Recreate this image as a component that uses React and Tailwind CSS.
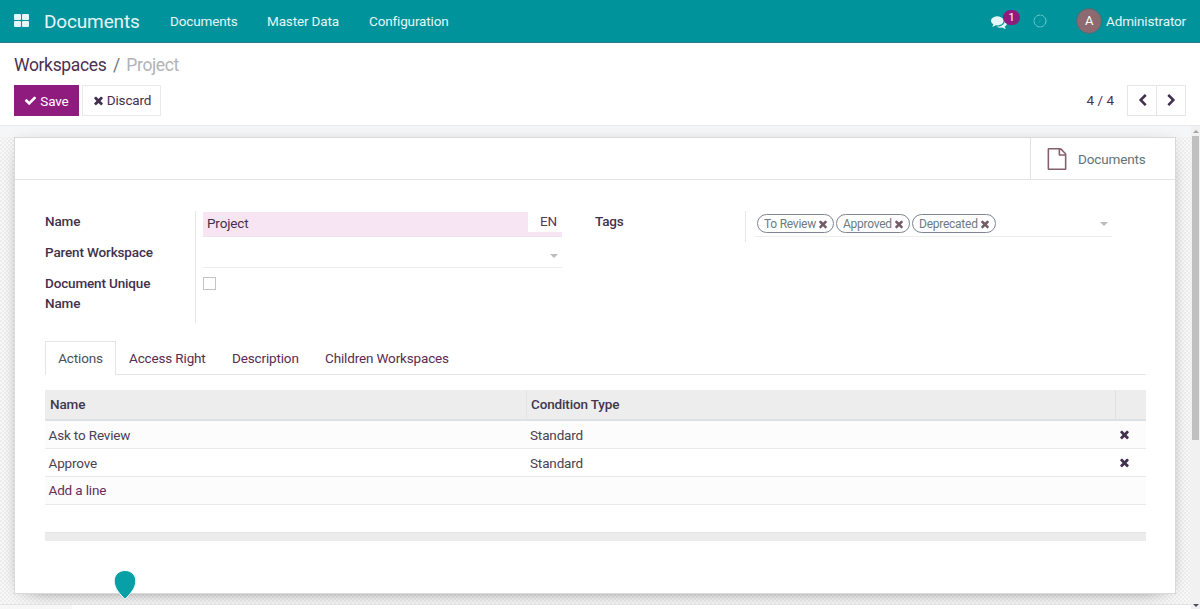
import React from "react";

const icons = {
  times:
    "M1490 1322q0 40-28 68l-136 136q-28 28-68 28t-68-28l-294-294-294 294q-28 28-68 28t-68-28l-136-136q-28-28-28-68t28-68l294-294-294-294q-28-28-28-68t28-68l136-136q28-28 68-28t68 28l294 294 294-294q28-28 68-28t68 28l136 136q28 28 28 68t-28 68l-294 294 294 294q28 28 28 68z",
  check:
    "M1671 566q0 40-28 68l-724 724-136 136q-28 28-68 28t-68-28l-136-136-362-362q-28-28-28-68t28-68l136-136q28-28 68-28t68 28l294 295 656-657q28-28 68-28t68 28l136 136q28 28 28 68z",
  left: "M1427 301l-531 531 531 531q19 19 19 45t-19 45l-166 166q-19 19-45 19t-45-19l-742-742q-19-19-19-45t19-45l742-742q19-19 45-19t45 19l166 166q19 19 19 45t-19 45z",
  right:
    "M1363 877l-742 742q-19 19-45 19t-45-19l-166-166q-19-19-19-45t19-45l531-531-531-531q-19-19-19-45t19-45l166-166q19-19 45-19t45 19l742 742q19 19 19 45t-19 45z",
  file: "M1596 380q28 28 48 76t20 88v1152q0 40-28 68t-68 28h-1344q-40 0-68-28t-28-68v-1600q0-40 28-68t68-28h896q40 0 88 20t76 48zm-444-244v376h376q-10-29-22-41l-313-313q-12-12-41-22zm384 1528v-1024h-416q-40 0-68-28t-28-68v-416h-768v1536h1280z",
  comments:
    "M1408 768q0 139-94 257t-256.5 186.5-353.5 68.5q-86 0-176-16-124 88-278 128-36 9-86 16h-3q-11 0-20.5-8t-11.5-21q-1-3-1-6.5t.5-6.5 2-6l2.5-5 3.5-5.5 4-5 4.5-5 4-4.5q5-6 23-25t26-29.5 22.5-29 25-38.5 20.5-44q-124-72-195-177t-71-224q0-139 94-257t256.5-186.5 353.5-68.5 353.5 68.5 256.5 186.5 94 257zm384 256q0 120-71 224.5t-195 176.5q10 24 20.5 44t25 38.5 22.5 29 26 29.5 23 25q1 1 4 4.5t4.5 5 4 5 3.5 5.5l2.5 5 2 6 .5 6.5-1 6.5q-3 14-13 22t-22 7q-50-7-86-16-154-40-278-128-90 16-176 16-271 0-472-132 58 4 88 4 161 0 309-45t264-129q125-92 192-212t67-254q0-77-23-152 129 71 204 178t75 230z",
};

const Icon = ({ name, className }) => (
  <svg viewBox="0 0 1792 1792" fill="currentColor" className={`shrink-0 ${className}`}>
    <path d={icons[name]} />
  </svg>
);

const Caret = ({ className }) => (
  <svg viewBox="0 0 8 4" className={`w-2 h-1 shrink-0 text-[#bcbcbc] ${className}`}>
    <path d="M0 0h8L4 4z" fill="currentColor" />
  </svg>
);

const Navbar = () => (
  <header className="h-[43px] shrink-0 flex items-center bg-[#00939b] border-b border-[#2c7d88] text-[#e4f6f7]">
    <div className="ml-3.5 mb-0.5 grid grid-cols-2 gap-px w-[15px] h-[13px]">
      <span className="bg-[#e4f6f7] rounded-[1px]" />
      <span className="bg-[#e4f6f7] rounded-[1px]" />
      <span className="bg-[#e4f6f7] rounded-[1px]" />
      <span className="bg-[#e4f6f7] rounded-[1px]" />
    </div>
    <span className="ml-[15px] w-[126px] text-[19px] tracking-[-0.15px] pt-0.5">Documents</span>
    <span className="w-[97px]">Documents</span>
    <span className="w-[102px]">Master Data</span>
    <span>Configuration</span>
    <div className="ml-auto flex items-center pr-3.5">
      <div className="relative w-[42px] h-[15px]">
        <Icon name="comments" className="w-4 h-4" />
        <span className="absolute left-3 -top-1 w-[17px] h-[15px] rounded-full bg-[#8f1b7e] text-white text-[11px] leading-[15px] text-center">
          1
        </span>
      </div>
      <svg viewBox="0 0 14 14" className="w-3.5 h-3.5 mr-[29px]" fill="none" stroke="#70cdd0">
        <circle cx="7" cy="7" r="6" strokeDasharray="4 0.7" />
        <path d="M7 4.500V8H5" strokeWidth="0.6" opacity="0.4" />
      </svg>
      <span className="w-[26px] h-[26px] mr-1 rounded-full bg-[#8c6a70] border border-[#41717a] flex items-center justify-center text-white text-[13px]">
        A
      </span>
      <span>Administrator</span>
    </div>
  </header>
);

const ControlPanel = () => (
  <section className="h-[83px] shrink-0 border-b border-[#e8e9ea] px-3.5 pt-[9px] text-[#4b3050]">
    <div className="h-[25px] flex items-center text-[17.5px] tracking-[-0.35px]">
      <span>Workspaces</span>
      <span className="px-[6.5px] text-[#6c757d]">/</span>
      <span className="text-[#b1b3b6]">Project</span>
    </div>
    <div className="mt-2 h-[31px] flex items-center">
      <button className="h-[31px] w-[65px] flex items-center justify-center gap-[3px] bg-[#8f1b7e] text-white">
        <Icon name="check" className="w-[13px] h-[13px]" />
        Save
      </button>
      <button className="ml-[3px] h-[31px] w-[79px] flex items-center justify-center gap-0.5 border border-[#e9eaec] text-[#43304d]">
        <Icon name="times" className="w-[13px] h-[13px]" />
        <span className="pb-px">Discard</span>
      </button>
      <span className="ml-auto mr-[13px] pb-px tracking-normal">4 / 4</span>
      <div className="flex h-[31px] w-[59px] border border-[#e3e5e8] text-[#43304d]">
        <button className="flex-1 flex items-center justify-center border-r border-[#e3e5e8]">
          <Icon name="left" className="w-[13px] h-[13px]" />
        </button>
        <button className="flex-1 flex items-center justify-center">
          <Icon name="right" className="w-[13px] h-[13px]" />
        </button>
      </div>
    </div>
  </section>
);

const Tag = ({ label, width }) => (
  <span
    className="h-[19px] shrink-0 flex items-center justify-between pl-1.5 pr-1 rounded-full border border-[#7f8490] text-[12px] tracking-[-0.25px] text-[#6c7a82]"
    style={{ width }}
  >
    <span className="pt-px">{label}</span>
    <Icon name="times" className="w-3 h-3 text-[#735c68]" />
  </span>
);

const FormFields = () => (
  <div className="mt-[31px] h-[112px] flex items-start">
    <div className="w-[150px] font-medium leading-5 text-[#43304d]">
      <div className="h-[31px]">Name</div>
      <div className="h-[31px]">Parent Workspace</div>
      <div className="w-[120px]">Document Unique Name</div>
    </div>
    <div className="w-[367px] h-[112px] border-l border-[#e6e7e9] pl-[7px]">
      <div className="mt-px h-[25px] flex items-start bg-[#f7e5f4] border-b border-[#efe1ee]">
        <span className="flex-1 pl-1 leading-[23px] text-[#43304d]">Project</span>
        <span className="w-[34px] h-[20px] pl-3 bg-white leading-[19px] text-[#5b3658]">EN</span>
      </div>
      <div className="h-[31px] flex items-end border-b border-[#eceded]">
        <Caret className="ml-auto mr-1 mb-[9px]" />
      </div>
      <div className="mt-[9px] w-[13px] h-[13px] border border-[#c4c4c4]" />
    </div>
    <div className="ml-[33px] w-[150px] font-medium leading-5 text-[#43304d]">Tags</div>
    <div className="h-[31px] w-[367px] border-l border-[#e6e7e9] pl-2">
      <div className="h-[26px] flex items-center gap-0.5 border-b border-[#eeeeef] pl-[3px]">
        <Tag label="To Review" width={77} />
        <Tag label="Approved" width={74} />
        <Tag label="Deprecated" width={84} />
        <Caret className="ml-auto mr-1" />
      </div>
    </div>
  </div>
);

const tabs = [
  { label: "Access Right", width: "w-[103px]" },
  { label: "Description", width: "w-[93px]" },
  { label: "Children Workspaces", width: "w-[150px]" },
];

const Tabs = () => (
  <div className="mt-[18px] h-[34px] flex text-[#5b2b50]">
    <div className="w-[71px] pb-px border border-b-0 border-[#e3e6e8] flex items-center justify-center text-[#495057]">
      Actions
    </div>
    <div className="flex-1 flex items-center border-b border-[#e3e6e8] pl-[13px]">
      {tabs.map((tab) => (
        <span key={tab.label} className={`whitespace-nowrap ${tab.width}`}>
          {tab.label}
        </span>
      ))}
    </div>
  </div>
);

const actions = [
  { name: "Ask to Review", condition: "Standard" },
  { name: "Approve", condition: "Standard" },
];

const ActionsTable = () => (
  <div className="mt-[15px] text-[#4a4252]">
    <div className="h-[31px] grid grid-cols-[482px_589px_1fr] bg-[#ededee] border-b-2 border-[#dde1e4] font-medium text-[#43364d] leading-[29px]">
      <span className="pl-[5px] border-r border-[#e2e4e5]">Name</span>
      <span className="pl-1 border-r border-[#e0e0e2]">Condition Type</span>
      <span />
    </div>
    {actions.map((action) => (
      <div
        key={action.name}
        className="h-7 grid grid-cols-[482px_589px_1fr] items-center border-b border-[#e6e8ea] odd:bg-white even:bg-[#fcfcfc]"
      >
        <span className="pl-[3.5px]">{action.name}</span>
        <span className="pl-[3px]">{action.condition}</span>
        <Icon name="times" className="w-[13px] h-[13px] ml-0.5 text-[#43304d]" />
      </div>
    ))}
    <div className="h-7 flex items-center pl-[3.5px] pb-px border-b border-[#e6e8ea] bg-[#fcfcfc] text-[#672c5c]">
      Add a line
    </div>
    <div className="mt-[27px] h-[9px] bg-[#ececec] border-t border-[#e3e4e5]" />
  </div>
);

const Scrollbar = () => (
  <div className="w-[9px] h-full shrink-0 bg-[#f1f1f1] flex flex-col items-center">
    <svg viewBox="0 0 6 3" className="w-1.5 h-[3px] mt-1 mb-[3px]">
      <path d="M0 3h6L3 0z" fill="#a3a3a3" />
    </svg>
    <div className="w-[7px] h-[304px] bg-[#c0c0c0]" />
    <svg viewBox="0 0 6 3" className="w-1.5 h-[3px] mt-auto mb-0.5">
      <path d="M0 0h6L3 3z" fill="#50505c" />
    </svg>
  </div>
);

export default function App() {
  return (
    <div className="relative w-[1200px] h-[609px] overflow-hidden flex flex-col bg-white font-[Roboto,sans-serif] text-[13.5px] leading-5 tracking-[-0.15px]">
      <Navbar />
      <ControlPanel />
      <main className="flex-1 min-h-0 flex">
        <div className="flex-1 flex flex-col">
          <div className="h-[478px] pl-3.5 pr-[15px] pt-[11px] overflow-hidden bg-[linear-gradient(#f5f6f7_11px,transparent_11px),repeating-conic-gradient(#ededee_0_25%,#f8f8f8_0_50%)] bg-[size:100%_100%,4px_4px]">
            <div className="h-[457px] bg-white border border-[#d8d9db] shadow-[0_5px_20px_-15px_#000,0_0_12px_rgba(0,0,0,0.05)]">
              <div className="h-[42px] flex justify-end border-b border-[#e1e3e5]">
                <div className="w-[145px] flex items-center border-l border-[#e1e2e4] pl-[15px] text-[#5f7379]">
                  <Icon name="file" className="w-[22px] h-[22px] mr-2.5 text-[#84606e]" />
                  <span className="pt-px">Documents</span>
                </div>
              </div>
              <div className="pl-[30px] pr-[29px]">
                <FormFields />
                <Tabs />
                <ActionsTable />
              </div>
            </div>
          </div>
          <div className="flex-1 border-t border-[#e2e2e3] bg-white">
            <div className="w-[72px] h-full bg-[#f7f7f7]" />
          </div>
        </div>
        <Scrollbar />
      </main>
      <svg viewBox="0 0 24 32" className="absolute left-[113px] top-[569px] w-6 h-8">
        <path
          d="M12 1.5c6.2 0 10.8 4.6 10.8 10.4 0 7.5-5.6 13-10.8 18.3C6.8 24.9 1.2 19.4 1.2 11.9 1.2 6.1 5.8 1.5 12 1.5z"
          fill="#08a0a7"
          stroke="#fff"
        />
      </svg>
    </div>
  );
}
